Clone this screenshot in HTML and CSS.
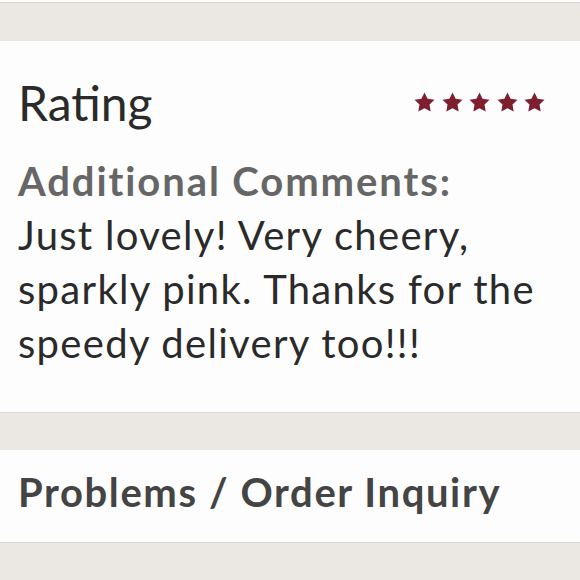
FILE: index.html
```html
<!DOCTYPE html>
<html lang="en">
<head>
    <meta charset="UTF-8">
    <meta name="viewport" content="width=device-width, initial-scale=1.0">
    <title>Review</title>
    <link rel="stylesheet" href="styles.css">
</head>
<body>

<div class="panel panel-top"></div>

<div class="panel review">
    <div class="review-head">
        <h2 class="review-title">Rating</h2>
        <div class="stars">
            <svg class="star" viewBox="0 0 24 24"><path d="M12 1.5l3.23 6.55 7.23 1.05-5.23 5.1 1.24 7.2L12 18l-6.47 3.4 1.24-7.2-5.23-5.1 7.23-1.05z"/></svg>
            <svg class="star" viewBox="0 0 24 24"><path d="M12 1.5l3.23 6.55 7.23 1.05-5.23 5.1 1.24 7.2L12 18l-6.47 3.4 1.24-7.2-5.23-5.1 7.23-1.05z"/></svg>
            <svg class="star" viewBox="0 0 24 24"><path d="M12 1.5l3.23 6.55 7.23 1.05-5.23 5.1 1.24 7.2L12 18l-6.47 3.4 1.24-7.2-5.23-5.1 7.23-1.05z"/></svg>
            <svg class="star" viewBox="0 0 24 24"><path d="M12 1.5l3.23 6.55 7.23 1.05-5.23 5.1 1.24 7.2L12 18l-6.47 3.4 1.24-7.2-5.23-5.1 7.23-1.05z"/></svg>
            <svg class="star" viewBox="0 0 24 24"><path d="M12 1.5l3.23 6.55 7.23 1.05-5.23 5.1 1.24 7.2L12 18l-6.47 3.4 1.24-7.2-5.23-5.1 7.23-1.05z"/></svg>
        </div>
    </div>
    <div class="comments">
        <div class="comments-label">Additional Comments:</div>
        <p class="comments-text">Just lovely! Very cheery, sparkly pink. Thanks for the speedy delivery too!!!</p>
    </div>
</div>

<div class="panel inquiry">
    <h2 class="inquiry-title">Problems / Order Inquiry</h2>
</div>

</body>
</html>
```

FILE: styles.css
```css
:root {
    --page-bg: #ebe8e3;
    --panel-bg: #fdfdfd;
    --panel-line: #dcd8d2;
    --text-dark: #2a2a2a;
    --text-grey: #666666;
    --star-color: #7e1f2f;
}

body {
    margin: 0;
    background-color: var(--page-bg);
    font-family: "Lato", "Open Sans", sans-serif;
    color: var(--text-dark);
}

.panel {
    background-color: var(--panel-bg);
    border-bottom: 1px solid var(--panel-line);
    padding: 0 18px;
}

.panel-top {
    height: 2px;
    margin-bottom: 38px;
}

.review {
    padding-top: 27px;
    padding-bottom: 42px;
    margin-bottom: 37px;
}

.review-head {
    display: flex;
    justify-content: space-between;
    align-items: center;
}

.review-title {
    margin: 0;
    font-size: 48px;
    font-weight: 400;
    line-height: 70px;
}

.stars {
    display: flex;
    gap: 4.5px;
    padding-right: 16px;
    padding-bottom: 2px;
}

.star {
    width: 23px;
    height: 23px;
    fill: var(--star-color);
}

.comments {
    margin-top: 16px;
}

.comments-label {
    font-size: 40px;
    font-weight: 700;
    letter-spacing: 1.9px;
    color: var(--text-grey);
    line-height: 54px;
}

.comments-text {
    margin: 0;
    font-size: 40px;
    letter-spacing: 1.3px;
    line-height: 54px;
}

.inquiry {
    padding-top: 12px;
    padding-bottom: 20px;
}

.inquiry-title {
    margin: 0;
    font-size: 40px;
    font-weight: 700;
    letter-spacing: 1.6px;
    color: #444444;
    line-height: 60px;
}
```
